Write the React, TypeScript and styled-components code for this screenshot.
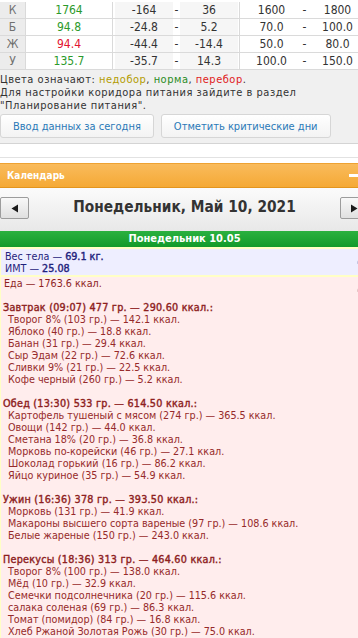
import React from "react";
import styled, { createGlobalStyle } from "styled-components";

const FONT = `"DejaVu Sans Condensed", "DejaVu Sans", sans-serif`;

const GlobalStyle = createGlobalStyle`
  html, body { margin: 0; padding: 0; background: #ffffff; overflow: hidden; }
  body { font-family: ${FONT}; }
  * { box-sizing: border-box; }
`;

const Page = styled.div`
  width: 369px;
`;

/* ---------- nutrition table ---------- */
const Table = styled.div`
  margin-top: 2px;
  font-size: 12px;
`;

const Row = styled.div`
  display: grid;
  grid-template-columns: 26px 87px 127px 129px;
  height: 17px;
  border-bottom: 1px solid #dadada;
  line-height: 16px;
`;

const LabelCell = styled.div`
  background: #ececec;
  color: #707070;
  text-align: center;
  border-right: 1px solid #dadada;
`;

type Tone = "ok" | "over";
const toneColor: Record<Tone, string> = { ok: "#2b9a2b", over: "#e3122f" };

const ValueCell = styled.div<{ $tone: Tone }>`
  background: #ffffff;
  color: ${(p) => toneColor[p.$tone]};
  text-align: center;
  border-right: 1px solid #dadada;
`;

const RangeCell = styled.div`
  display: flex;
  padding: 0 1px 0 2px;
  border-right: 1px solid #dadada;
`;

const RangeNum = styled.div<{ $shade?: boolean }>`
  flex: 1;
  text-align: center;
  color: #333333;
  background: ${(p) => (p.$shade ? "#f6f6f6" : "transparent")};
`;

const RangeDash = styled.div`
  width: 7px;
  text-align: center;
  color: #333333;
`;

/* ---------- info block ---------- */
const Info = styled.div`
  background: #f0f0f0;
  padding: 3px 0 5px;
  border-bottom: 1px solid #d4d4d4;
  font-size: 11px;
  letter-spacing: 0.5px;
  line-height: 13px;
  color: #333333;
`;

const Legend = styled.span<{ $c: string }>`
  color: ${(p) => p.$c};
`;

const ButtonRow = styled.div`
  display: flex;
  gap: 7px;
  margin-top: 2px;
  letter-spacing: normal;
`;

const ActionButton = styled.button`
  height: 24px;
  padding: 0 12px;
  font-family: ${FONT};
  font-size: 11px;
  color: #2a79b8;
  background: linear-gradient(#ffffff, #f3f3f3);
  border: 1px solid #d6d6d6;
  border-radius: 3px;
`;

const Divider = styled.div`
  margin-top: 13px;
  margin-bottom: 5px;
  border-top: 1px solid #e2e2e2;
`;

/* ---------- calendar ---------- */
const PanelHeader = styled.div`
  height: 25px;
  display: flex;
  align-items: center;
  justify-content: space-between;
  padding: 0 9px 0 7px;
  background: linear-gradient(#f9bb5c, #f5a935);
  border-top: 1px solid #eea232;
  border-bottom: 1px solid #e3951e;
  color: #ffffff;
  font-weight: bold;
  font-size: 10px;
`;

const Collapse = styled.span`
  width: 11px;
  height: 3px;
  background: #ffffff;
`;

const DateNav = styled.div`
  height: 43px;
  display: flex;
  justify-content: space-between;
  align-items: flex-start;
  padding-top: 9px;
  background: linear-gradient(#fbfbfb, #e8e8e8);
`;

const NavButton = styled.button`
  width: 29px;
  height: 22px;
  padding: 0;
  display: flex;
  align-items: center;
  justify-content: center;
  border: 1px solid #9c9c9c;
  border-radius: 2px;
  background: linear-gradient(#f8f8f8, #e0e0e0);
`;

const DateTitle = styled.div`
  font-size: 15.3px;
  line-height: 20px;
  font-weight: bold;
  color: #333333;
`;

const DayBar = styled.div`
  height: 16px;
  line-height: 16px;
  text-align: center;
  color: #ffffff;
  font-weight: bold;
  font-size: 11px;
  background: linear-gradient(#2bb13f, #129a2a);
`;

const Entries = styled.div`
  background: #ffffc6;
  padding: 2px 0 0 1px;
  display: flex;
  flex-direction: column;
  gap: 2px;
`;

const Box = styled.div<{ $kind: "body" | "food" }>`
  position: relative;
  padding: ${(p) => (p.$kind === "body" ? "2px 3px 1px" : "1px 3px 40px 2px")};
  background: ${(p) => (p.$kind === "body" ? "#eeeeff" : "#ffeded")};
  color: ${(p) => (p.$kind === "body" ? "#1f237c" : "#8e1f1f")};
  font-size: 10.7px;
  line-height: ${(p) => (p.$kind === "body" ? "11.5px" : "12px")};
`;

const Strong = styled.span`
  -webkit-text-stroke: 0.4px currentColor;
`;

const EditIcon = styled.svg`
  position: absolute;
  right: 4px;
  top: 6px;
`;

const Line = styled.div`
  padding-left: 1px;
`;

const Meal = styled.div`
  margin-top: 12px;
`;

const MealHead = styled.div`
  -webkit-text-stroke: 0.4px currentColor;
  letter-spacing: 0.25px;
`;

const Item = styled.div`
  padding-left: 5px;
  color: #962a2a;
`;

const rows: {
  k: string;
  v: string;
  tone: Tone;
  a: string;
  b: string;
  c: string;
  d: string;
}[] = [
  { k: "К", v: "1764", tone: "ok", a: "-164", b: "36", c: "1600", d: "1800" },
  { k: "Б", v: "94.8", tone: "ok", a: "-24.8", b: "5.2", c: "70.0", d: "100.0" },
  { k: "Ж", v: "94.4", tone: "over", a: "-44.4", b: "-14.4", c: "50.0", d: "80.0" },
  { k: "У", v: "135.7", tone: "ok", a: "-35.7", b: "14.3", c: "100.0", d: "150.0" },
];

const meals: { head: string; items: string[] }[] = [
  {
    head: "Завтрак (09:07) 477 гр. — 290.60 ккал.:",
    items: [
      "Творог 8% (103 гр.) — 142.1 ккал.",
      "Яблоко (40 гр.) — 18.8 ккал.",
      "Банан (31 гр.) — 29.4 ккал.",
      "Сыр Эдам (22 гр.) — 72.6 ккал.",
      "Сливки 9% (21 гр.) — 22.5 ккал.",
      "Кофе черный (260 гр.) — 5.2 ккал.",
    ],
  },
  {
    head: "Обед (13:30) 533 гр. — 614.50 ккал.:",
    items: [
      "Картофель тушеный с мясом (274 гр.) — 365.5 ккал.",
      "Овощи (142 гр.) — 44.0 ккал.",
      "Сметана 18% (20 гр.) — 36.8 ккал.",
      "Морковь по-корейски (46 гр.) — 27.1 ккал.",
      "Шоколад горький (16 гр.) — 86.2 ккал.",
      "Яйцо куриное (35 гр.) — 54.9 ккал.",
    ],
  },
  {
    head: "Ужин (16:36) 378 гр. — 393.50 ккал.:",
    items: [
      "Морковь (131 гр.) — 41.9 ккал.",
      "Макароны высшего сорта вареные (97 гр.) — 108.6 ккал.",
      "Белые жареные (150 гр.) — 243.0 ккал.",
    ],
  },
  {
    head: "Перекусы (18:36) 313 гр. — 464.60 ккал.:",
    items: [
      "Творог 8% (100 гр.) — 138.0 ккал.",
      "Мёд (10 гр.) — 32.9 ккал.",
      "Семечки подсолнечника (20 гр.) — 115.6 ккал.",
      "салака соленая (69 гр.) — 86.3 ккал.",
      "Томат (помидор) (84 гр.) — 16.8 ккал.",
      "Хлеб Ржаной Золотая Рожь (30 гр.) — 75.0 ккал.",
    ],
  },
];

const Arrow = ({ dir }: { dir: "left" | "right" }) => (
  <svg width="8" height="9" viewBox="0 0 8 9">
    {dir === "left" ? (
      <path d="M7 0.5 L7 8.5 L0.5 4.5 Z" fill="#1a1a1a" />
    ) : (
      <path d="M1 0.5 L1 8.5 L7.5 4.5 Z" fill="#1a1a1a" />
    )}
  </svg>
);

const Pencil = ({ color }: { color: string }) => (
  <EditIcon width="9" height="10" viewBox="0 0 9 10">
    <path d="M1 9 L1 6.5 L6 1.5 L8 3.5 L3 8.5 Z" fill={color} />
  </EditIcon>
);

export default function App() {
  return (
    <Page>
      <GlobalStyle />
      <Table>
        {rows.map((r) => (
          <Row key={r.k}>
            <LabelCell>{r.k}</LabelCell>
            <ValueCell $tone={r.tone}>{r.v}</ValueCell>
            <RangeCell>
              <RangeNum $shade>{r.a}</RangeNum>
              <RangeDash>-</RangeDash>
              <RangeNum $shade>{r.b}</RangeNum>
            </RangeCell>
            <RangeCell>
              <RangeNum>{r.c}</RangeNum>
              <RangeDash>-</RangeDash>
              <RangeNum>{r.d}</RangeNum>
            </RangeCell>
          </Row>
        ))}
      </Table>

      <Info>
        <div>
          Цвета означают: <Legend $c="#b39c00">недобор</Legend>,{" "}
          <Legend $c="#2a8c1e">норма</Legend>,{" "}
          <Legend $c="#e01b1b">перебор</Legend>.
        </div>
        <div>Для настройки коридора питания зайдите в раздел</div>
        <div>"Планирование питания".</div>
        <ButtonRow>
          <ActionButton>Ввод данных за сегодня</ActionButton>
          <ActionButton>Отметить критические дни</ActionButton>
        </ButtonRow>
      </Info>

      <Divider />

      <PanelHeader>
        <span>Календарь</span>
        <Collapse />
      </PanelHeader>

      <DateNav>
        <NavButton>
          <Arrow dir="left" />
        </NavButton>
        <DateTitle>Понедельник, Май 10, 2021</DateTitle>
        <NavButton>
          <Arrow dir="right" />
        </NavButton>
      </DateNav>

      <DayBar>Понедельник 10.05</DayBar>

      <Entries>
        <Box $kind="body">
          <Line>
            Вес тела — <Strong>69.1 кг.</Strong>
          </Line>
          <Line>
            ИМТ — <Strong>25.08</Strong>
          </Line>
          <Pencil color="#c4c4e0" />
        </Box>
        <Box $kind="food">
          <Line>Еда — 1763.6 ккал.</Line>
          {meals.map((m) => (
            <Meal key={m.head}>
              <MealHead>{m.head}</MealHead>
              {m.items.map((it) => (
                <Item key={it}>{it}</Item>
              ))}
            </Meal>
          ))}
          <Pencil color="#e6c6c6" />
        </Box>
      </Entries>
    </Page>
  );
}
